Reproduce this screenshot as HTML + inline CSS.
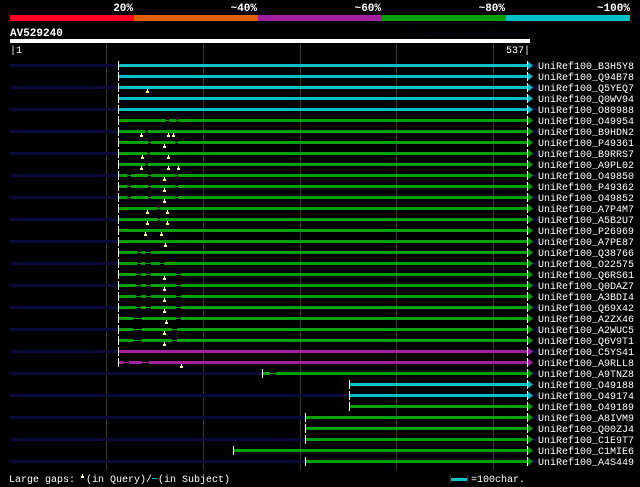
<!DOCTYPE html>
<html><head><meta charset="utf-8"><style>
html,body{margin:0;padding:0;background:#000;width:640px;height:487px;overflow:hidden}
svg{display:block}
text{font-family:"Liberation Mono",monospace;font-size:10px;fill:#fff}
.b{font-weight:bold;font-size:11px}
</style></head><body>
<svg id="s" width="640" height="487" xmlns="http://www.w3.org/2000/svg">
<rect x="10" y="15" width="124" height="6" fill="#ff0022"/>
<rect x="134" y="15" width="124" height="6" fill="#e06000"/>
<rect x="258" y="15" width="124" height="6" fill="#a020a0"/>
<rect x="382" y="15" width="124" height="6" fill="#00a000"/>
<rect x="506" y="15" width="124" height="6" fill="#00c0c8"/>
<text class="b" x="133" y="11" text-anchor="end">20%</text>
<text class="b" x="257" y="11" text-anchor="end">~40%</text>
<text class="b" x="381" y="11" text-anchor="end">~60%</text>
<text class="b" x="505" y="11" text-anchor="end">~80%</text>
<text class="b" x="630" y="11" text-anchor="end">~100%</text>
<text class="b" x="10" y="36">AV529240</text>
<text x="530" y="36" text-anchor="end" style="fill:#05051f;font-size:9px">AlignView.pm Beta rel.7</text>
<rect x="10" y="39" width="520" height="4" fill="#fff"/>
<text x="10" y="53">|1</text>
<text x="530" y="53" text-anchor="end">537|</text>
<g id="grid" fill="#3a3a10">
<rect x="106" y="44" width="1" height="426"/><rect x="203" y="44" width="1" height="426"/>
<rect x="300" y="44" width="1" height="426"/><rect x="396" y="44" width="1" height="426"/>
<rect x="493" y="44" width="1" height="426"/>
</g>
<g id="rows"></g>
<text x="9" y="482">Large gaps:</text>
<rect x="81" y="476" width="3" height="2" fill="#ffff80"/><rect x="82" y="474" width="1" height="3" fill="#ffff80"/>
<text x="86" y="482">(in Query)/</text><rect x="152" y="478" width="5" height="1" fill="#00c0c8"/>
<text x="158" y="482">(in Subject)</text>
<rect x="450" y="478" width="17" height="3" fill="#00c0c8"/><rect x="450" y="475" width="1" height="8" fill="#3a3a10"/><rect x="467" y="475" width="1" height="8" fill="#3a3a10"/>
<text x="471" y="482">=100char.</text>
</svg>
<script>
var C="#00c0c8",G="#00a000",P="#a020a0";
var R=[
["B3H5Y8",C,118,[[118,527]],[]],
["Q94B78",C,118,[[118,527]],[]],
["Q5YEQ7",C,118,[[118,527]],[147]],
["Q0WV94",C,118,[[118,527]],[]],
["O80988",C,118,[[118,527]],[]],
["O49954",G,118,[[118,166],[169,176],[178,527]],[]],
["B9HDN2",G,118,[[118,145],[148,527]],[141,168,173]],
["P49361",G,118,[[118,148],[151,175],[178,527]],[164]],
["B9RRS7",G,118,[[118,147],[150,527]],[142,168]],
["A9PL02",G,118,[[118,145],[148,527]],[141,168,178]],
["O49850",G,118,[[118,127],[131,148],[151,175],[178,527]],[164]],
["P49362",G,118,[[118,127],[131,148],[151,175],[178,527]],[164]],
["O49852",G,118,[[118,127],[131,148],[151,175],[178,527]],[164]],
["A7P4M7",G,118,[[118,158],[160,527]],[147,167]],
["A5B2U7",G,118,[[118,158],[160,527]],[147,167]],
["P26969",G,118,[[118,527]],[145,161]],
["A7PE87",G,118,[[118,527]],[165]],
["Q38766",G,118,[[118,137],[141,145],[151,527]],[]],
["O22575",G,118,[[118,137],[141,145],[151,160],[164,527]],[]],
["Q6RS61",G,118,[[118,136],[141,146],[151,176],[181,527]],[164]],
["Q0DAZ7",G,118,[[118,136],[141,146],[151,176],[181,527]],[164]],
["A3BDI4",G,118,[[118,136],[141,146],[151,176],[181,527]],[164]],
["Q69X42",G,118,[[118,136],[141,146],[151,176],[181,527]],[164]],
["A2ZX46",G,118,[[118,133],[142,176],[181,527]],[166]],
["A2WUC5",G,118,[[118,133],[142,172],[177,527]],[164]],
["Q6V9T1",G,118,[[118,133],[142,172],[177,527]],[164]],
["C5YS41",P,118,[[118,527]],[]],
["A9RLL8",P,118,[[118,123],[129,142],[149,527]],[181]],
["A9TNZ8",G,262,[[262,270],[276,527]],[]],
["O49188",C,349,[[349,527]],[]],
["O49174",C,349,[[349,527]],[]],
["O49189",G,349,[[349,527]],[]],
["A8IVM9",G,305,[[305,527]],[]],
["Q00ZJ4",G,305,[[305,527]],[]],
["C1E9T7",G,305,[[305,527]],[]],
["C1MIE6",G,233,[[233,527]],[]],
["A4S449",G,305,[[305,527]],[]]
];
var h="";
R.forEach(function(r,i){
 var y=64+11*i,c=r[1],s=r[2];
 if(i%2==0){h+='<rect x="10" y="'+y+'" width="'+(s-10)+'" height="3" fill="#0a0a38"/>';h+='<rect x="532" y="'+y+'" width="6" height="3" fill="#0a0a38"/>';}
 h+='<rect x="'+s+'" y="'+(y+1)+'" width="'+(527-s)+'" height="1" fill="'+c+'"/>';
 r[3].forEach(function(g){h+='<rect x="'+g[0]+'" y="'+y+'" width="'+(g[1]-g[0])+'" height="3" fill="'+c+'"/>';});
 h+='<polygon points="527,'+(y-3)+' 533,'+(y+1.5)+' 527,'+(y+6)+'" fill="'+c+'"/>';
 h+='<rect x="'+s+'" y="'+(y-3)+'" width="1" height="9" fill="#fff"/>';
 h+='<rect x="527" y="'+(y-3)+'" width="1" height="9" fill="#fff"/>';
 r[4].forEach(function(t){h+='<rect x="'+t+'" y="'+(y+3)+'" width="1" height="3" fill="#ffff80"/><rect x="'+(t-1)+'" y="'+(y+5)+'" width="3" height="2" fill="#ffff80"/>';});
 h+='<text x="538" y="'+(y+5)+'">UniRef100_'+r[0]+'</text>';
});
document.getElementById("rows").innerHTML=h;
</script>
</body></html>
